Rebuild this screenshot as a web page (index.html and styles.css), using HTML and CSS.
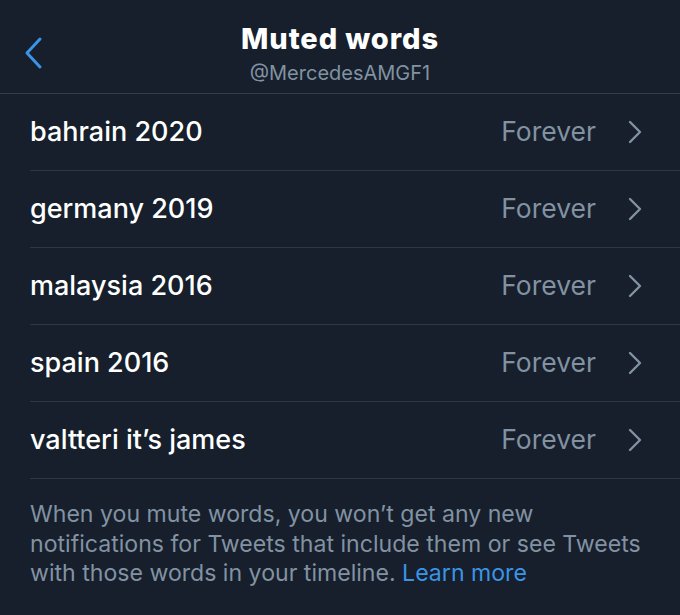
FILE: index.html
```html
<!DOCTYPE html>
<html>
<head>
<meta charset="utf-8">
<link rel="stylesheet" href="styles.css">
</head>
<body>
<div class="screen">
  <header class="header">
    <div class="back">
      <svg width="20" height="34" viewBox="0 0 20 34"><path d="M16 3 L3 17 L16 31" fill="none" stroke="#3b94e6" stroke-width="3" stroke-linecap="round" stroke-linejoin="round"/></svg>
    </div>
    <div class="titles">
      <h1 class="title">Muted words</h1>
      <div class="handle">@MercedesAMGF1</div>
    </div>
    <div></div>
  </header>
  <ul class="list">
    <li class="row"><span class="word">bahrain 2020</span><span class="dur">Forever</span><svg class="chev" width="16" height="24" viewBox="0 0 16 24"><path d="M3 2 L13 12 L3 22" fill="none" stroke="#8292a2" stroke-width="2.4" stroke-linecap="round" stroke-linejoin="round"/></svg></li>
    <li class="row"><span class="word">germany 2019</span><span class="dur">Forever</span><svg class="chev" width="16" height="24" viewBox="0 0 16 24"><path d="M3 2 L13 12 L3 22" fill="none" stroke="#8292a2" stroke-width="2.4" stroke-linecap="round" stroke-linejoin="round"/></svg></li>
    <li class="row"><span class="word">malaysia 2016</span><span class="dur">Forever</span><svg class="chev" width="16" height="24" viewBox="0 0 16 24"><path d="M3 2 L13 12 L3 22" fill="none" stroke="#8292a2" stroke-width="2.4" stroke-linecap="round" stroke-linejoin="round"/></svg></li>
    <li class="row"><span class="word">spain 2016</span><span class="dur">Forever</span><svg class="chev" width="16" height="24" viewBox="0 0 16 24"><path d="M3 2 L13 12 L3 22" fill="none" stroke="#8292a2" stroke-width="2.4" stroke-linecap="round" stroke-linejoin="round"/></svg></li>
    <li class="row"><span class="word">valtteri it’s james</span><span class="dur">Forever</span><svg class="chev" width="16" height="24" viewBox="0 0 16 24"><path d="M3 2 L13 12 L3 22" fill="none" stroke="#8292a2" stroke-width="2.4" stroke-linecap="round" stroke-linejoin="round"/></svg></li>
  </ul>
  <p class="note">When you mute words, you won’t get any new notifications for Tweets that include them or see Tweets with those words in your timeline. <a class="link">Learn more</a></p>
</div>
</body>
</html>
```

FILE: styles.css
```css
html, body {
  margin: 0;
  padding: 0;
  background: #161f2b;
}
.screen {
  width: 680px;
  height: 615px;
  background: #161f2b;
  font-family: Inter, "Noto Sans", sans-serif;
  color: #ffffff;
  overflow: hidden;
}
.header {
  height: 93px;
  border-bottom: 1px solid #323d4a;
  display: grid;
  grid-template-columns: 1fr auto 1fr;
  align-items: center;
  box-sizing: content-box;
}
.back {
  padding-left: 24px;
  display: flex;
  align-items: center;
  padding-top: 12px;
}
.titles {
  text-align: center;
  padding-top: 14px;
}
.title {
  margin: 0;
  font-size: 29px;
  font-weight: 800;
  line-height: 34px;
  letter-spacing: 0.9px;
}
.handle {
  font-size: 20px;
  line-height: 26px;
  color: #8292a2;
  margin-top: 4px;
}
.list {
  list-style: none;
  margin: 0;
  padding: 0;
}
.row {
  margin-left: 30px;
  height: 76px;
  border-bottom: 1px solid #2c3744;
  display: flex;
  align-items: center;
  padding-right: 37px;
}
.word {
  flex: 1;
  font-size: 27px;
  font-weight: 500;
  margin-top: -2px;
}
.dur {
  font-size: 26.5px;
  color: #8292a2;
  margin-right: 31px;
  margin-top: -2px;
}
.chev {
  display: block;
}
.note {
  margin: 0;
  padding: 21px 30px 0 30px;
  font-size: 23.1px;
  line-height: 29.5px;
  color: #8292a2;
}
.link {
  color: #3b94e6;
}
```
